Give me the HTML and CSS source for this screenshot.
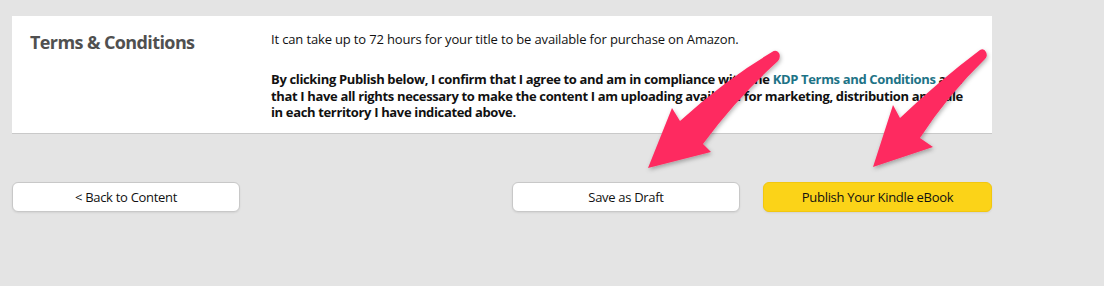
FILE: index.html
```html
<!DOCTYPE html>
<html>
<head>
<meta charset="utf-8">
<link rel="stylesheet" href="styles.css">
</head>
<body>
<div class="page">
  <section class="card">
    <h2 class="card-title">Terms &amp; Conditions</h2>
    <div class="card-body">
      <p class="note">It can take up to 72 hours for your title to be available for purchase on Amazon.</p>
      <p class="confirm">By clicking Publish below, I confirm that I agree to and am in compliance with the <a class="link" href="#">KDP Terms and Conditions</a> and that I have all rights necessary to make the content I am uploading available for marketing, distribution and sale in each territory I have indicated above.</p>
    </div>
  </section>
  <div class="actions">
    <button class="btn">&lt; Back to Content</button>
    <div class="right-actions">
      <button class="btn">Save as Draft</button>
      <button class="btn btn-primary">Publish Your Kindle eBook</button>
    </div>
  </div>
</div>
<svg class="arrows" width="1104" height="286" viewBox="0 0 1104 286">
  <defs>
    <filter id="sh" x="-20%" y="-20%" width="140%" height="140%">
      <feDropShadow dx="1" dy="2" stdDeviation="2" flood-color="#000" flood-opacity="0.3"/>
    </filter>
  </defs>
  <path filter="url(#sh)" fill="#fe2c60" d="M772 52 Q776 49 779 53 Q781 57 778 61 Q735 100 703 144 L711 152 L648 168 L672 108 L680 121 Q725 80 772 52 Z"/>
  <path filter="url(#sh)" fill="#fe2c60" d="M980 50 Q984 48 986 52 Q988 56 985 59 Q948 95 920 138 L933 147 L873 167 L893 105 L900 118 Q940 80 980 50 Z"/>
</svg>
</body>
</html>
```
FILE: styles.css
```css
html, body {
  margin: 0;
  padding: 0;
}
body {
  background: #e4e4e4;
  font-family: "Open Sans", "Noto Sans", sans-serif;
  color: #111;
  width: 1104px;
  height: 286px;
  overflow: hidden;
  position: relative;
}
.page {
  padding: 16px 0 0 12px;
  width: 980px;
}
.card {
  background: #fff;
  border-bottom: 1px solid #c9c9c9;
  display: grid;
  grid-template-columns: 259px 705px;
  padding: 14px 0 12px 0;
}
.card-title {
  margin: 0;
  padding-left: 18px;
  font-size: 18px;
  font-weight: 700;
  color: #505050;
  line-height: 24px;
  letter-spacing: -0.6px;
}
.card-body {
  min-width: 0;
}
.note {
  margin: 0;
  font-size: 13px;
  line-height: 16px;
  padding-top: 1px;
  letter-spacing: -0.15px;
}
.confirm {
  margin: 24px 0 0 0;
  font-size: 13px;
  line-height: 16.5px;
  font-weight: 700;
  letter-spacing: -0.35px;
}
.link {
  color: #1d7386;
  text-decoration: none;
}
.actions {
  margin-top: 48px;
  display: flex;
  justify-content: space-between;
}
.right-actions {
  display: flex;
  gap: 23px;
}
.btn {
  width: 228px;
  height: 30px;
  background: #fff;
  border: 1px solid #c8c8c8;
  border-radius: 6px;
  font-family: "Open Sans", "Noto Sans", sans-serif;
  font-size: 13px;
  color: #111;
  box-shadow: 0 1px 2px rgba(0,0,0,0.08);
  letter-spacing: -0.3px;
  padding: 0;
}
.btn-primary {
  background: #fbd318;
  border-color: #f2c70f;
  width: 229px;
}
.arrows {
  position: absolute;
  left: 0;
  top: 0;
  pointer-events: none;
}
```
